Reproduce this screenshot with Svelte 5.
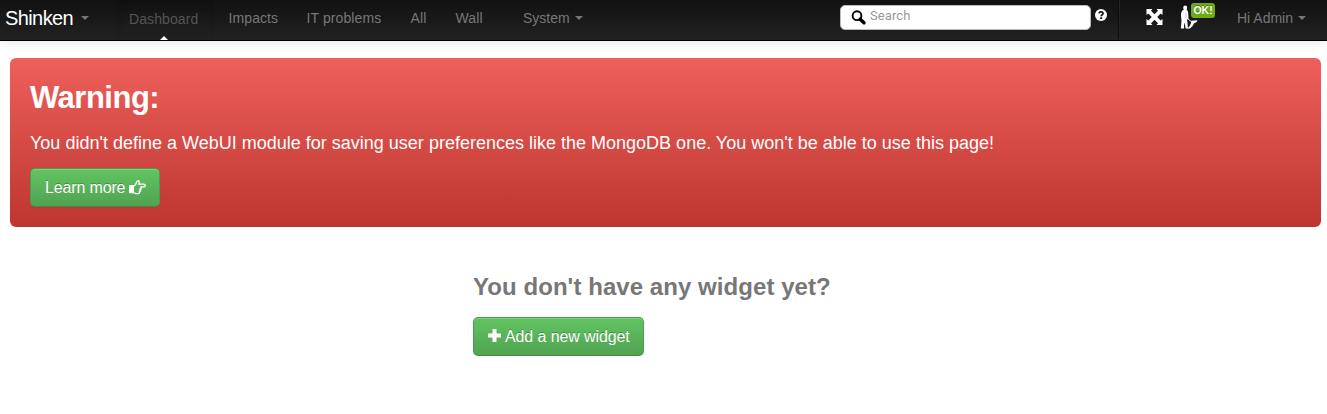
<script>
  const links = [
    { label: 'Dashboard', width: 98, active: true },
    { label: 'Impacts', width: 78 },
    { label: 'IT problems', width: 104 },
    { label: 'All', width: 45 },
    { label: 'Wall', width: 56 }
  ];
</script>

<header class="navbar">
  <a class="brand" href="#top"><span>Shinken</span> <i class="caret"></i></a>
  <nav>
    {#each links as link}
      <a href="#top" class:active={link.active} style="width:{link.width}px">{link.label}</a>
    {/each}
    <a href="#top" class="system">System <i class="caret"></i></a>
  </nav>
  <div class="search">
    <svg width="16" height="16" viewBox="0 0 16 16"><circle cx="6" cy="5.7" r="4.4" fill="none" stroke="#000" stroke-width="1.9" /><path d="M9.2 9.2 13 12.7" stroke="#000" stroke-width="3.5" stroke-linecap="round" /></svg>
    <input type="text" placeholder="Search" aria-label="Search" />
  </div>
  <svg class="help" width="12" height="12" viewBox="0 0 12 12"><circle cx="6" cy="6" r="6" fill="#fff" /><path d="M4 4.4C4.2 2.4 8 2.4 8 4.6 8 5.9 6.2 5.8 6.2 7.2" fill="none" stroke="#1a1a1a" stroke-width="1.8" /><rect x="5.2" y="8.2" width="2" height="1.8" fill="#1a1a1a" /></svg>
  <div class="tools">
    <svg class="expand" width="17" height="16" viewBox="0 0 16 16" fill="#fff"><path d="M0 0h6L4.5 1.8 8 5.3l3.5-3.500L10 0h6v6l-1.800-1.500L10.700 8l3.500 3.500L16 10v6h-6l1.500-1.800L8 10.700l-3.500 3.500L6 16H0v-6l1.800 1.500L5.300 8 1.800 4.500 0 6z" /></svg>
    <div class="status">
      <svg width="18" height="24" viewBox="0 0 18 24" fill="#fff"><ellipse cx="5.200" cy="2.900" rx="2" ry="2.400" /><path d="M3.600 4.700h3.200C8 5.700 8.300 7.500 8.300 9.500l.2 4.500-1.500.8.500 3.200.300 4.200 1 1.300H5.700L4.600 17.500 4 20l.1 3.500H.8L1.500 16 1 10.500c0-3 .7-5.200 2.600-5.800z" /><path d="m7.500 13.500 4.200 3.500" fill="none" stroke="#fff" stroke-width="1" /><path d="m11.300 15.800 6.300-.5-1.200 2-2.300 1-1.500 2.700-2.700 2.500H7.600l2.100-2.500 1.300-2.700z" /><path d="m5.900 8 .3 5" stroke="#aaa" stroke-width=".6" /></svg>
      <span>OK!</span>
    </div>
    <a href="#top">Hi Admin <i class="caret"></i></a>
  </div>
</header>

<main>
  <section class="warning">
    <h1>Warning:</h1>
    <p>You didn't define a WebUI module for saving user preferences like the MongoDB one. You won't be able to use this page!</p>
    <button class="learn"><span>Learn more</span>
      <svg width="17" height="15" viewBox="0 0 16 14"><path d="M4 5.200h1.200C6.900 4.200 7 1 8.200.700c1.400-.2 2 1.500.9 3.100h4.700c2 0 2.100 2.600 0 2.600h-3.100c1.300.4 1.100 2-.2 2.200.8.6.5 2-.7 2.100.5.9 0 2-1.300 2H7c-1.500 0-2-.9-3-.9z" fill="none" stroke="#fff" stroke-width="1.250" /><path d="M0 4.800h4v7.600H0z" fill="#fff" /></svg>
    </button>
  </section>
  <section class="empty">
    <h2>You don't have any widget yet?</h2>
    <button class="add">
      <svg width="13" height="13" viewBox="0 0 13 13"><path d="M4.500 0h4v4.500H13v4H8.500V13h-4V8.500H0v-4h4.500z" fill="#fff" /></svg>
      <span>Add a new widget</span>
    </button>
  </section>
</main>

<style>
  :global(body) { margin: 0; background: #fff; font-family: "Liberation Sans", Arial, sans-serif; overflow: hidden; }
  svg { flex: none; }
  a { color: #777; text-decoration: none; }
  .navbar { box-sizing: border-box; display: flex; align-items: flex-start; height: 41px; background: linear-gradient(#111, #222); border-bottom: 1px solid #000; box-shadow: 0 1px 10px rgba(0, 0, 0, .1); font-size: 14px; line-height: 20px; white-space: nowrap; }
  .caret { display: inline-block; border: 4px solid transparent; border-top-color: #777; border-bottom: 0; vertical-align: 3px; margin-left: 1px; }
  .brand { box-sizing: border-box; width: 116px; padding: 8px 0 0 5px; color: #fff; font-size: 20px; }
  .brand span { letter-spacing: -.6px; }
  .brand .caret { vertical-align: 5px; margin-left: 2px; }
  nav { display: flex; width: 724px; }
  nav a { box-sizing: border-box; height: 40px; padding: 8px 0 0 14.500px; letter-spacing: .1px; }
  nav a.active { position: relative; color: #555; padding: 9px 0 0 13px; box-shadow: inset 0 3px 8px rgba(0, 0, 0, .125); }
  nav a.active::after { content: ""; position: absolute; bottom: 0; left: 44px; border: 4px solid transparent; border-bottom-color: #fff; border-top: 0; }
  nav a.system { padding-left: 26px; letter-spacing: 0; }
  .search { box-sizing: border-box; display: flex; width: 251px; height: 25px; margin-top: 5px; border: 1px solid #bbb; border-radius: 5px; background: #fff; padding: 4px 0 0 10px; }
  input { width: 210px; height: 15px; padding: 0; margin: -2px 0 0 3px; border: 0; outline: 0; background: transparent; font: 13px/15px Roboto, sans-serif; letter-spacing: .1px; }
  input::placeholder { color: #999; opacity: 1; }
  .help { margin: 9px 0 0 4px; }
  .tools { box-sizing: border-box; display: flex; flex: 1; height: 39px; margin-left: 11px; border-left: 1px solid #0c0c0c; box-shadow: inset 1px 0 #242424; }
  .expand { margin: 9px 0 0 27px; }
  .status { position: relative; width: 74px; margin: 5px 0 0 17px; }
  .status span { position: absolute; left: 11px; top: -2px; width: 24px; height: 15px; border-radius: 3px; background: #6fac13; color: #fff; font: bold 10.5px/15px "Liberation Sans", sans-serif; text-align: center; text-shadow: 0 -1px rgba(0, 0, 0, .4); }
  .status svg { display: block; }
  .tools a { padding-top: 8px; margin-left: -17px; }
  main { padding: 17px 6px 0 10px; }
  .warning { box-sizing: border-box; height: 169px; padding: 20px; border-radius: 6px; background: linear-gradient(#ee5f5b, #bd362f); color: #fff; }
  h1 { margin: 0; font-size: 31px; line-height: 39px; letter-spacing: -.5px; height: 40px; }
  p { margin: 15px 0; font-size: 18px; line-height: 20px; white-space: nowrap; letter-spacing: .004px; }
  button { box-sizing: border-box; display: flex; align-items: center; height: 39px; border: 1px solid #4a9d4a; border-bottom-color: #458b45; border-radius: 5px; background: linear-gradient(#62c462, #51a351); box-shadow: inset 0 1px rgba(255, 255, 255, .2), 0 1px 2px rgba(0, 0, 0, .05); color: #fff; font: 16px/20px "Liberation Sans", sans-serif; text-shadow: 0 -1px rgba(0, 0, 0, .25); white-space: nowrap; padding: 0 14px; }
  .learn { width: 130px; gap: 4px; }
  .learn span { letter-spacing: -.15px; }
  .add { width: 171px; gap: 4px; }
  .add span { letter-spacing: -.1px; }
  .add svg { margin-top: -2px; }
  .empty { margin: 40px 0 0 463px; color: #777; }
  h2 { margin: 0 0 10px; font-size: 24px; line-height: 40px; letter-spacing: .06px; }
</style>
